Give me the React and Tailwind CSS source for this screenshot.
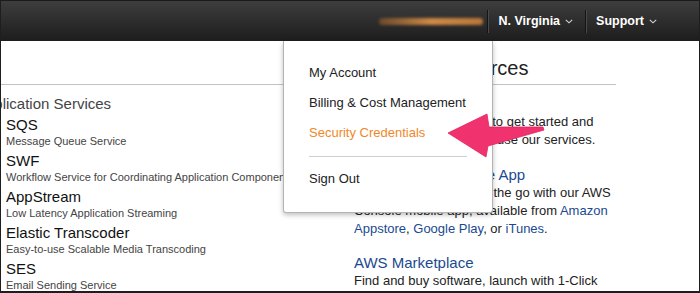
import React from "react";

const services = [
  { name: "SQS", desc: "Message Queue Service" },
  { name: "SWF", desc: "Workflow Service for Coordinating Application Components" },
  { name: "AppStream", desc: "Low Latency Application Streaming" },
  { name: "Elastic Transcoder", desc: "Easy-to-use Scalable Media Transcoding" },
  { name: "SES", desc: "Email Sending Service" },
];

const Caret = () => (
  <svg width="8" height="5" viewBox="0 0 8 5" className="ml-[5px] mt-[1px]">
    <path d="M0.8 0.8 L4 3.8 L7.2 0.8" fill="none" stroke="#d6d6d6" strokeWidth="1.1" />
  </svg>
);

const Separator = () => (
  <div className="flex h-[23px]">
    <div className="w-px bg-[#141414]" />
    <div className="w-px bg-[#4a4a4a]" />
  </div>
);

const App = () => {
  return (
    <div className="relative w-[700px] h-[293px] overflow-hidden bg-white border-x border-b-2 border-[#1e1e1e] font-['Liberation_Sans',Arial,sans-serif]">
      {/* top bar */}
      <header className="h-[41px] flex items-center justify-end bg-gradient-to-b from-[#3e3e3e] to-[#1d1d1d] border-t border-[#1a1a1a]">
        <div className="w-[104px] h-[7px] mr-[4px] rounded-full bg-gradient-to-r from-[#6a4a2c] via-[#cf8a46] to-[#b9773a] blur-[1.5px]" />
        <Separator />
        <div className="flex items-center pl-[9px] pr-[12px] text-[12.5px] font-bold text-white">
          N. Virginia <Caret />
        </div>
        <Separator />
        <div className="flex items-center pl-[9px] pr-[42px] text-[12.5px] font-bold text-white">
          Support <Caret />
        </div>
      </header>

      <main className="flex">
        {/* left column */}
        <div className="w-[353px] shrink-0">
          <div className="h-[44px] border-b border-[#c2c2c2]" />
          <h3 className="-ml-[25px] mt-[10px] text-[15px] leading-[18px] text-[#444] whitespace-nowrap">
            Application Services
          </h3>
          <ul className="mt-[3px] pl-[5px]">
            {services.map((s) => (
              <li key={s.name} className="mb-[4px] whitespace-nowrap">
                <div className="text-[15px] leading-[18px] text-[#111]">{s.name}</div>
                <div className="text-[11px] leading-[14px] text-[#444]">{s.desc}</div>
              </li>
            ))}
          </ul>
        </div>

        {/* right column */}
        <div className="w-[262px] shrink-0 text-[13px] leading-[18px] text-[#222] whitespace-nowrap">
          <div className="pt-[15px] pb-[4px] border-b border-[#c2c2c2]">
            <h2 className="ml-[11px] text-[20px] leading-[24px] text-[#222]">Helpful Resources</h2>
          </div>
          <p className="mt-[28px]">
            Read our AWS tutorials to get started and
            <br />
            learn the simple ways to use our services.
          </p>
          <h4 className="mt-[17px] text-[15px] leading-[18px] text-[#1a4a8f]">AWS Console Mobile App</h4>
          <p>
            Keep informed while on the go with our AWS
            <br />
            Console mobile app, available from <span className="text-[#1a4a8f]">Amazon</span>
            <br />
            <span className="text-[#1a4a8f]">Appstore</span>, <span className="text-[#1a4a8f]">Google Play</span>, or{" "}
            <span className="text-[#1a4a8f]">iTunes</span>.
          </p>
          <h4 className="mt-[16px] text-[15px] leading-[18px] text-[#1a4a8f]">AWS Marketplace</h4>
          <p>Find and buy software, launch with 1-Click</p>
        </div>
      </main>

      {/* account dropdown */}
      <div className="absolute left-[282px] top-[41px] w-[210px] pt-[17px] pb-[18px] pl-[25px] pr-[25px] bg-white border-x border-b border-[#b3b3b3] rounded-b-[3px] shadow-[0_2px_5px_rgba(0,0,0,0.25)] text-[13px] text-[#222]">
        <div className="leading-[30px]">My Account</div>
        <div className="leading-[30px]">Billing &amp; Cost Management</div>
        <div className="leading-[30px] text-[#f0882a]">Security Credentials</div>
        <div className="mt-[8px] h-px bg-[#cfcfcf]" />
        <div className="mt-[7px] leading-[30px]">Sign Out</div>
      </div>

      {/* annotation arrow */}
      <svg className="absolute left-0 top-0" width="700" height="293" viewBox="0 0 700 293">
        <path
          d="M447 133 L486 114 L488 127 L542 127 L543 130 L487 146 L485 157 Z"
          fill="#f0336e"
          stroke="#e02560"
          strokeWidth="0.8"
          strokeLinejoin="round"
        />
      </svg>
    </div>
  );
};

export default App;
